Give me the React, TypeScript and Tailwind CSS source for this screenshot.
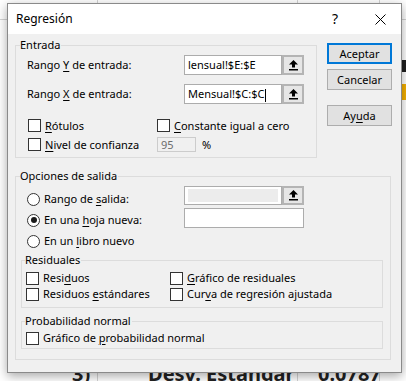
import React from "react";

const U = ({ children }: { children: React.ReactNode }) => (
  <span className="underline decoration-1 underline-offset-[2px]">{children}</span>
);

const Check = () => (
  <span className="w-[13px] h-[13px] shrink-0 border border-[#333333] bg-white" />
);

const Radio = ({ on }: { on?: boolean }) => (
  <span className="w-[13px] h-[13px] shrink-0 rounded-full border border-[#333333] bg-white flex items-center justify-center">
    {on && <span className="w-[6px] h-[6px] rounded-full bg-[#1a1a1a]" />}
  </span>
);

const Arrow = () => (
  <svg width="9" height="11" viewBox="0 0 9 11">
    <polygon points="4.5,0 9,4.5 6,4.5 6,7.5 3,7.5 3,4.5 0,4.5" fill="#000" />
    <rect x="0" y="9" width="9" height="1.5" fill="#000" />
  </svg>
);

const RefEdit = ({
  text,
  caret,
  disabled,
  h,
}: {
  text?: string;
  caret?: boolean;
  disabled?: boolean;
  h: string;
}) => (
  <div className={`flex w-[120px] ${h}`}>
    <div className="flex-1 border border-[#acacac] bg-white flex items-center pl-[3px] overflow-hidden">
      {disabled ? (
        <div className="w-[90px] h-[13px] bg-[#ececec]" />
      ) : (
        <span className="whitespace-nowrap text-black">
          {text}
          {caret && <span className="inline-block w-px h-[13px] bg-black align-middle ml-px" />}
        </span>
      )}
    </div>
    <div className="w-[22px] border-2 border-[#b4b4b4] bg-[#e6e6e6] flex items-center justify-center">
      <Arrow />
    </div>
  </div>
);

const Group = ({
  label,
  className,
  labelLeft,
  children,
}: {
  label: string;
  className: string;
  labelLeft: string;
  children: React.ReactNode;
}) => (
  <div className={`relative border border-[#dcdcdc] ${className}`}>
    <span
      className={`absolute ${labelLeft} -top-[9px] h-[16px] leading-[16px] bg-[#f0f0f0] pr-[1px] text-black whitespace-nowrap`}
    >
      {label}
    </span>
    {children}
  </div>
);

const Btn = ({ children, primary }: { children: React.ReactNode; primary?: boolean }) => (
  <div
    className={`h-[21px] w-[65px] flex items-center justify-center bg-[#e1e1e1] text-black ${
      primary ? "border-2 border-[#0078d7]" : "border border-[#adadad]"
    }`}
  >
    {children}
  </div>
);

export default function App() {
  return (
    <div className="relative w-[406px] h-[381px] bg-white overflow-hidden font-['Noto_Sans',sans-serif] text-[11px] leading-[16px] text-black">
      {/* spreadsheet behind the dialog */}
      <div className="absolute left-[97px] top-0 w-px h-full bg-[#d4d4d4]" />
      <div className="absolute left-[297px] top-0 w-px h-full bg-[#d4d4d4]" />
      <div className="absolute left-[379px] top-0 w-px h-full bg-[#d4d4d4]" />
      <div className="absolute left-0 top-[19px] w-full h-px bg-[#d4d4d4]" />
      <div className="absolute left-[402px] top-[84px] w-[4px] h-[16px] bg-[#f4b000]" />
      <div className="absolute left-[402px] top-[60px] w-[4px] h-[12px] bg-[#202020]" />
      <div className="absolute left-[72px] top-[362px] font-bold text-[20px] leading-[24px] text-[#222] whitespace-nowrap">
        3)
      </div>
      <div className="absolute left-[148px] top-[362px] font-bold text-[20px] leading-[24px] text-[#222] whitespace-nowrap">
        Desv. Estándar
      </div>
      <div className="absolute left-[318px] top-[362px] font-bold text-[20px] leading-[24px] text-[#222] whitespace-nowrap">
        0.0787
      </div>

      {/* dialog window */}
      <div className="absolute left-[7px] top-[3px] w-[395px] h-[370px] border border-[#8a8a8a] bg-[#f0f0f0] shadow-[0_3px_10px_rgba(0,0,0,0.35)] flex flex-col">
        {/* title bar */}
        <div className="h-[30px] bg-white flex items-center pl-[8px] shrink-0">
          <span className="flex-1 text-[12px]">Regresión</span>
          <span className="w-[20px] text-center text-[14px] leading-[16px]">?</span>
          <span className="w-[20px] ml-[25px] mr-[11px] flex items-center justify-center">
            <svg width="11" height="11" viewBox="0 0 11 11">
              <path d="M0.5 0.5 L10.5 10.5 M10.5 0.5 L0.5 10.5" stroke="#000" strokeWidth="1" />
            </svg>
          </span>
        </div>

        {/* body */}
        <div className="flex-1 pl-[7px] pt-[9px]">
          <div className="flex">
            <Group label="Entrada" labelLeft="left-[4px]" className="mt-[2px] w-[302px] h-[113px]">
              <div className="pl-[11px] pt-[9px]">
                <div className="flex items-center h-[20px]">
                  <span className="w-[157px]">
                    Rango <U>Y</U> de entrada:
                  </span>
                  <RefEdit text="lensual!$E:$E" h="h-[20px]" />
                </div>
                <div className="flex items-center h-[20px] mt-[9px]">
                  <span className="w-[157px]">
                    Rango <U>X</U> de entrada:
                  </span>
                  <RefEdit text="Mensual!$C:$C" caret h="h-[20px]" />
                </div>
                <div className="ml-[1px] mt-[14px] grid grid-cols-[129px_auto] auto-rows-[15px] gap-y-[4px]">
                  <div className="flex items-center gap-[4px]">
                    <Check />
                    <span>
                      <U>R</U>ótulos
                    </span>
                  </div>
                  <div className="flex items-center gap-[4px]">
                    <Check />
                    <span>
                      <U>C</U>onstante igual a cero
                    </span>
                  </div>
                  <div className="flex items-center gap-[4px]">
                    <Check />
                    <span>
                      <U>N</U>ivel de confianza
                    </span>
                  </div>
                  <div className="flex items-center">
                    <div className="w-[39px] h-[15px] border border-[#cccccc] bg-[#f0f0f0] flex items-center pl-[3px] text-[#6d6d6d]">
                      95
                    </div>
                    <span className="ml-[6px]">%</span>
                  </div>
                </div>
              </div>
            </Group>
            <div className="ml-[10px] flex flex-col">
              <Btn primary>Aceptar</Btn>
              <div className="mt-[5px]">
                <Btn>Cancelar</Btn>
              </div>
              <div className="mt-[15px]">
                <Btn>
                  <span>
                    Ay<U>u</U>da
                  </span>
                </Btn>
              </div>
            </div>
          </div>

          <Group label="Opciones de salida" labelLeft="left-[4px]" className="mt-[18px] w-[376px] h-[184px]">
            <div className="pl-[11px] pt-[9px]">
              <div className="flex h-[19px]">
                <div className="w-[157px] self-start mt-[5px] h-[16px] flex items-center gap-[4px]">
                  <Radio />
                  <span>
                    Rango de <U>s</U>alida:
                  </span>
                </div>
                <RefEdit disabled h="h-[19px]" />
              </div>
              <div className="flex h-[20px] mt-[3px]">
                <div className="w-[157px] self-start mt-[4px] h-[16px] flex items-center gap-[4px]">
                  <Radio on />
                  <span>
                    En una <U>h</U>oja nueva:
                  </span>
                </div>
                <div className="w-[120px] h-[20px] border border-[#acacac] bg-white" />
              </div>
              <div className="mt-[5px] h-[16px] flex items-center gap-[4px]">
                <Radio />
                <span>
                  En un <U>l</U>ibro nuevo
                </span>
              </div>
            </div>

            <Group label="Residuales" labelLeft="left-[3px]" className="ml-[5px] mt-[11px] w-[362px] h-[48px]">
              <div className="pl-[4px] pt-[9px] grid grid-cols-[144px_auto] auto-rows-[16px]">
                <div className="flex items-center gap-[4px]">
                  <Check />
                  <span>
                    Resi<U>d</U>uos
                  </span>
                </div>
                <div className="flex items-center gap-[4px]">
                  <Check />
                  <span>
                    <U>G</U>ráfico de residuales
                  </span>
                </div>
                <div className="flex items-center gap-[4px]">
                  <Check />
                  <span>
                    Residuos <U>e</U>stándares
                  </span>
                </div>
                <div className="flex items-center gap-[4px]">
                  <Check />
                  <span>
                    Cur<U>v</U>a de regresión ajustada
                  </span>
                </div>
              </div>
            </Group>

            <Group label="Probabilidad normal" labelLeft="left-[3px]" className="ml-[5px] mt-[13px] w-[362px] h-[28px]">
              <div className="pl-[4px] pt-[8px]">
                <div className="h-[16px] flex items-center gap-[4px]">
                  <Check />
                  <span>
                    Gráfico de <U>p</U>robabilidad normal
                  </span>
                </div>
              </div>
            </Group>
          </Group>
        </div>
      </div>
    </div>
  );
}
